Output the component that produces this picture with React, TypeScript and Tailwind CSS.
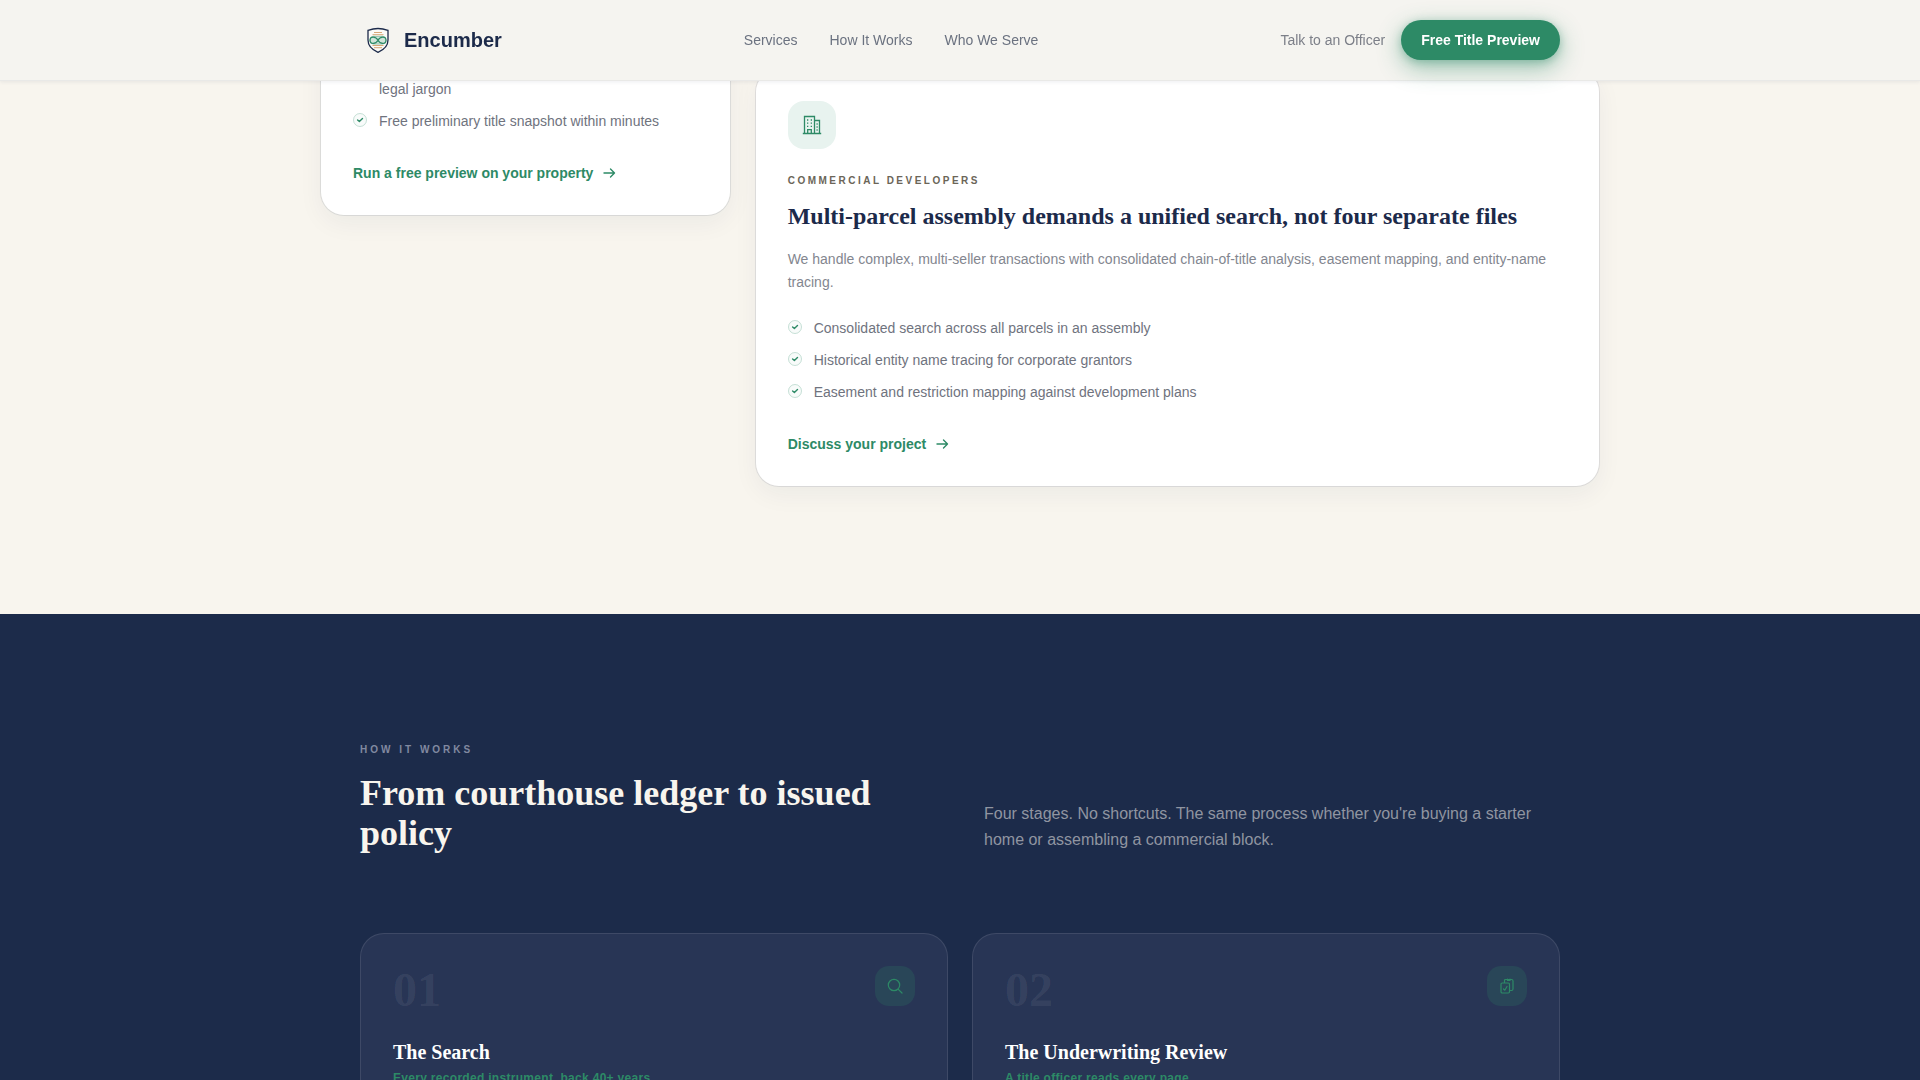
import type { ReactNode } from "react";

const navLinks = ["Services", "How It Works", "Who We Serve"];

const developerPoints = [
  "Consolidated search across all parcels in an assembly",
  "Historical entity name tracing for corporate grantors",
  "Easement and restriction mapping against development plans",
];

function ShieldLogo() {
  return (
    <svg viewBox="0 0 36 36" className="size-9" fill="none" aria-hidden="true">
      <path
        d="M18 6.500c3.600 0 6.800.7 10 1.800v9.700c0 6-3.900 9.700-10 12.300C11.900 27.700 8 24 8 18V8.300C11.200 7.200 14.400 6.500 18 6.500Z"
        fill="#fbfaf7"
        stroke="#1c2a4a"
        strokeWidth="1.300"
      />
      <path d="M14 10.500h8M12.500 12.700h11M12.500 23.500h11M14 25.700h8" stroke="#d8a878" strokeWidth="1" />
      <rect x="10" y="14.300" width="16" height="7.800" rx="3.500" fill="#2d8a66" fillOpacity=".2" stroke="#2d8a66" strokeOpacity=".55" strokeWidth=".8" />
      <path
        d="M18 18.200c-2-3.800-8-4.600-8 0s6 3.800 8 0 8-4.600 8 0-6 3.800-8 0Z"
        stroke="#2d8a66"
        strokeWidth="1.200"
      />
    </svg>
  );
}

function CheckIcon() {
  return (
    <svg viewBox="0 0 14 14" className="mt-0.5 size-3.5 shrink-0" fill="none" aria-hidden="true">
      <circle cx="7" cy="7" r="6.500" fill="#2d8a66" fillOpacity=".03" stroke="#2d8a66" strokeOpacity=".25" />
      <path d="m4.600 6.900 1.800 1.700 3.100-3" stroke="#2d8a66" strokeWidth="1.400" strokeLinecap="round" strokeLinejoin="round" />
    </svg>
  );
}

function ArrowIcon() {
  return (
    <svg viewBox="0 0 16 16" className="size-4" fill="none" stroke="currentColor" strokeWidth="1.400" strokeLinecap="round" strokeLinejoin="round" aria-hidden="true">
      <path d="M3 8h10.500M9.500 4l4 4-4 4" />
    </svg>
  );
}

function BuildingsIcon() {
  return (
    <svg viewBox="0 0 20 20" className="size-5" fill="none" stroke="currentColor" strokeWidth="1.300" aria-hidden="true">
      <path d="M.8 18.500h18.400M2.500 18.500v-17h10v17M12.500 5.500h5v13M5.700 18.500v-3.800h3.600v3.800" />
      <path d="M5 5h1.300M8.700 5H10M5 8.200h1.300M8.700 8.200H10M5 11.400h1.300M8.700 11.400H10M14.500 9h1.200M14.500 12h1.200M14.500 15h1.200" />
    </svg>
  );
}

function SearchIcon() {
  return (
    <svg viewBox="0 0 18 18" className="size-4.5" fill="none" stroke="currentColor" strokeWidth="1.200" strokeLinecap="round" aria-hidden="true">
      <circle cx="8" cy="8" r="5.700" />
      <path d="m12.300 12.300 3.700 3.700" />
    </svg>
  );
}

function ReviewIcon() {
  return (
    <svg viewBox="0 0 18 18" className="size-4.5" fill="none" stroke="currentColor" strokeWidth="1.200" strokeLinecap="round" strokeLinejoin="round" aria-hidden="true">
      <path d="M6.500 5.500V3.500a1 1 0 0 1 1-1h6a1.500 1.500 0 0 1 1.500 1.500v8a1.500 1.500 0 0 1-1.500 1.500h-1M9.500 2v1.500h2.500V2" />
      <rect x="3" y="6" width="8.500" height="10" rx="1.200" />
      <path d="m5.500 12 1.300 1.200L9 9.500" />
    </svg>
  );
}

function Point({ children }: { children: ReactNode }) {
  return (
    <li className="flex items-start gap-3">
      <CheckIcon />
      <span>{children}</span>
    </li>
  );
}

function CardLink({ children }: { children: ReactNode }) {
  return (
    <a href="#preview" className="mt-8 flex w-fit items-center gap-2 text-sm font-semibold text-[#2d8a66]">
      {children}
      <ArrowIcon />
    </a>
  );
}

function StageCard({ number, title, tagline, icon }: { number: string; title: string; tagline: string; icon: ReactNode }) {
  return (
    <article className="rounded-3xl border border-white/10 bg-[#283555] p-8">
      <div className="flex items-start justify-between">
        <span className="font-['Liberation_Serif',serif] text-5xl leading-none font-bold text-white/8">{number}</span>
        <span className="flex size-10 items-center justify-center rounded-[14px] bg-[#2d8a66]/20 text-[#2d8a66]">{icon}</span>
      </div>
      <h3 className="mt-6 font-['Liberation_Serif',serif] text-xl leading-7 font-semibold text-white">{title}</h3>
      <p className="text-xs leading-6 font-semibold tracking-wide text-[#2d8a66]">{tagline}</p>
    </article>
  );
}

export default function App() {
  return (
    <div className="h-screen overflow-hidden bg-[#f8f5ee] font-['Liberation_Sans',Arial,sans-serif] text-[#1c2a4a]">
      <header className="fixed inset-x-0 top-0 z-10 border-b border-[#1c2a4a]/5 bg-[#f5f4f0] shadow-[0_1px_4px_rgba(28,42,74,0.08)]">
        <div className="mx-auto flex h-20 max-w-[1200px] items-center justify-between">
          <a href="#top" className="flex items-center gap-2">
            <ShieldLogo />
            <span className="text-xl font-bold">Encumber</span>
          </a>
          <nav className="flex gap-8 text-sm text-[#6b7280]">
            {navLinks.map((label) => (
              <a key={label} href="#section">
                {label}
              </a>
            ))}
          </nav>
          <div className="flex items-center gap-4">
            <a href="#contact" className="text-sm text-[#7c7f88]">
              Talk to an Officer
            </a>
            <button
              type="button"
              className="h-10 rounded-full bg-[#2d8a66] px-5 text-sm font-semibold text-white shadow-[0_8px_24px_rgba(45,138,102,0.45),0_2px_8px_rgba(45,138,102,0.35)]"
            >
              Free Title Preview
            </button>
          </div>
        </div>
      </header>

      <main>
        <section className="pb-[127px]">
          <div className="mx-auto grid max-w-7xl grid-cols-3 items-start gap-6">
            <article className="rounded-b-3xl border border-t-0 border-[#1c2a4a]/10 bg-white bg-clip-padding px-8 pt-[79px] pb-8 shadow-[0_8px_24px_rgba(28,42,74,0.05)]">
              <ul className="space-y-3 text-sm leading-5 text-[#6f737e]">
                <li className="pl-[26px]">legal jargon</li>
                <Point>Free preliminary title snapshot within minutes</Point>
              </ul>
              <CardLink>Run a free preview on your property</CardLink>
            </article>

            <article className="col-span-2 mt-[68px] rounded-3xl border border-[#1c2a4a]/10 bg-white bg-clip-padding p-8 shadow-[0_8px_24px_rgba(28,42,74,0.05)]">
              <span className="flex size-12 items-center justify-center rounded-2xl bg-[#e8f3ef] text-[#2d8a66]">
                <BuildingsIcon />
              </span>
              <p className="mt-6 text-[10px] leading-[15px] font-semibold tracking-[0.25em] text-[#6b6558] uppercase">
                Commercial Developers
              </p>
              <h3 className="mt-3 font-['Liberation_Serif',serif] text-2xl leading-8 font-bold">
                Multi-parcel assembly demands a unified search, not four separate files
              </h3>
              <p className="mt-4 text-sm leading-[23px] text-[#83868f]">
                We handle complex, multi-seller transactions with consolidated chain-of-title analysis, easement
                mapping, and entity-name tracing.
              </p>
              <ul className="mt-6 space-y-3 text-sm leading-5 text-[#6f737e]">
                {developerPoints.map((point) => (
                  <Point key={point}>{point}</Point>
                ))}
              </ul>
              <CardLink>Discuss your project</CardLink>
            </article>
          </div>
        </section>

        <section className="bg-[#1c2b4a] py-32">
          <div className="mx-auto max-w-[1200px]">
            <div className="grid grid-cols-2 items-end gap-12">
              <div>
                <p className="text-[10px] leading-[15px] font-semibold tracking-[0.3em] text-[#8189a0] uppercase">
                  How It Works
                </p>
                <h2 className="mt-4 font-['Liberation_Serif',serif] text-4xl leading-10 font-bold text-[#f8f5ee]">
                  From courthouse ledger to issued policy
                </h2>
              </div>
              <p className="leading-[26px] text-[#9095a1]">
                Four stages. No shortcuts. The same process whether you're buying a starter home or assembling a
                commercial block.
              </p>
            </div>
            <div className="mt-20 grid grid-cols-2 gap-6">
              <StageCard
                number="01"
                title="The Search"
                tagline="Every recorded instrument, back 40+ years"
                icon={<SearchIcon />}
              />
              <StageCard
                number="02"
                title="The Underwriting Review"
                tagline="A title officer reads every page"
                icon={<ReviewIcon />}
              />
            </div>
          </div>
        </section>
      </main>
    </div>
  );
}
